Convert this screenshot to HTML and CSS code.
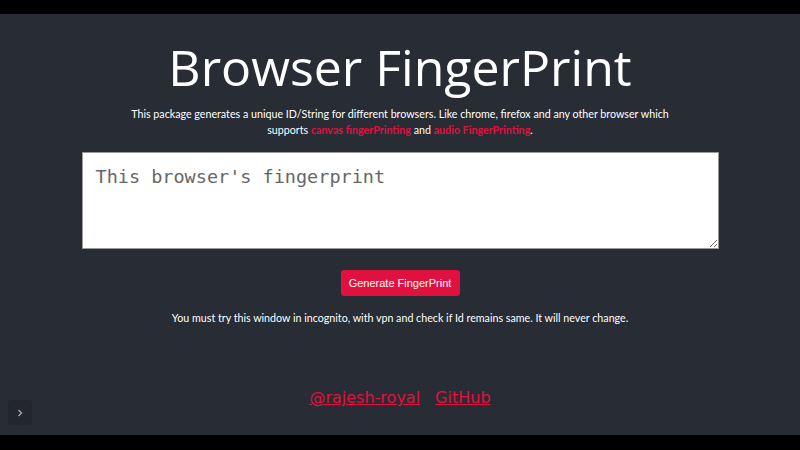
FILE: index.html
```html
<!DOCTYPE html>
<html>
<head>
<meta charset="utf-8">
<link rel="stylesheet" href="styles.css">
</head>
<body>
<div class="frame">
  <main class="app">
    <h1 class="title">Browser FingerPrint</h1>
    <p class="intro">This package generates a unique ID/String for different browsers. Like chrome, firefox and any other browser which<br>supports <a class="hl">canvas fingerPrinting</a> and <a class="hl">audio FingerPrinting</a>.</p>
    <textarea class="print">This browser's fingerprint</textarea>
    <button class="gen">Generate FingerPrint</button>
    <p class="note">You must try this window in incognito, with vpn and check if Id remains same. It will never change.</p>
    <div class="links">
      <a class="link">@rajesh-royal</a>
      <a class="link">GitHub</a>
    </div>
    <div class="toggle">
      <svg width="10" height="10" viewBox="0 0 10 10"><path d="M3.5 2 L6.5 5 L3.5 8" fill="none" stroke="#9aa0a8" stroke-width="1.5"/></svg>
    </div>
  </main>
</div>
</body>
</html>
```
FILE: styles.css
```css
html, body {
  margin: 0;
  padding: 0;
  background: #000;
  width: 800px;
  height: 450px;
  overflow: hidden;
}
.frame {
  padding-top: 14px;
}
.app {
  position: relative;
  height: 421px;
  background: #282c34;
  display: flex;
  flex-direction: column;
  align-items: center;
  color: #fff;
  font-family: "Lato", sans-serif;
}
.title {
  margin: 21px 0 0;
  font-family: "Open Sans", sans-serif;
  font-weight: 400;
  font-size: 50px;
  line-height: 64px;
}
.intro {
  margin: 7px 0 0;
  font-size: 10.7px;
  line-height: 16px;
  text-align: center;
}
.hl {
  color: #e0103f;
  font-weight: bold;
}
.print {
  margin-top: 14px;
  width: 637px;
  height: 97px;
  box-sizing: border-box;
  border: 1px solid #999;
  background: #fff;
  padding: 13px 13px;
  font-family: "DejaVu Sans Mono", monospace;
  font-size: 18.5px;
  color: #666;
  resize: vertical;
  display: block;
}
.gen {
  margin-top: 21px;
  width: 119px;
  height: 26px;
  border: none;
  border-radius: 3px;
  background: #e0103f;
  color: #fff;
  font-family: "Liberation Sans", Arial, sans-serif;
  font-size: 11px;
  padding: 0;
}
.note {
  margin: 14px 0 0;
  font-size: 10.7px;
  line-height: 16px;
}
.links {
  margin-top: 62px;
  display: flex;
  gap: 15px;
  font-family: "DejaVu Sans", sans-serif;
  font-size: 16px;
}
.link {
  color: #e0103f;
  text-decoration: underline;
}
.toggle {
  position: absolute;
  left: 8px;
  top: 386px;
  width: 24px;
  height: 25px;
  border-radius: 4px;
  background: #23262d;
  display: flex;
  align-items: center;
  justify-content: center;
}
```
